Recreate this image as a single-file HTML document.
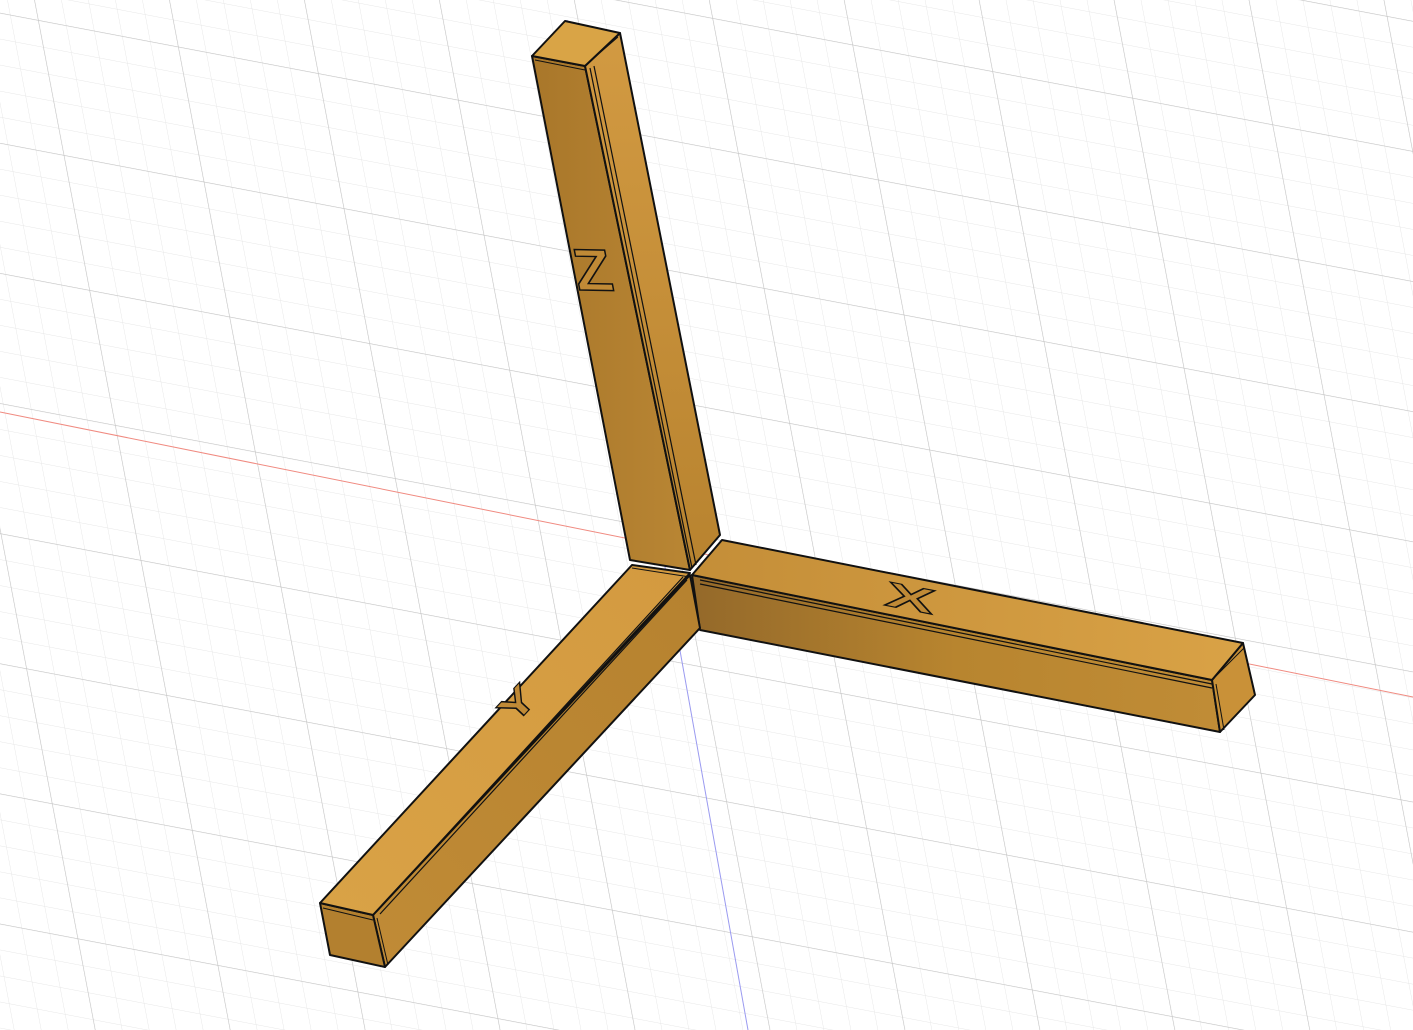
<!DOCTYPE html>
<html><head><meta charset="utf-8"><style>
html,body{margin:0;padding:0;background:#fff;overflow:hidden}
svg{display:block}
</style></head><body>
<svg width="1413" height="1030" viewBox="0 0 1413 1030" xmlns="http://www.w3.org/2000/svg">
<defs>
<pattern id="minor" width="28" height="27" patternUnits="userSpaceOnUse" patternTransform="matrix(1,0.19,0.19,1,38,20)">
<path d="M0 0H28M0 0V27" stroke="#e6e6e6" stroke-width="1" fill="none"/>
</pattern>
<pattern id="major" width="140" height="135" patternUnits="userSpaceOnUse" patternTransform="matrix(1,0.19,0.19,1,38,20)">
<path d="M0 0H140M0 0V135" stroke="#c4c4c4" stroke-width="1.2" fill="none"/>
</pattern>
<linearGradient id="zl" x1="0" y1="0" x2="1" y2="0"><stop offset="0" stop-color="#a9772a"/><stop offset="1" stop-color="#b98634"/></linearGradient>
<linearGradient id="zr" x1="0" y1="0" x2="0" y2="1"><stop offset="0" stop-color="#d29a42"/><stop offset="1" stop-color="#b8832f"/></linearGradient>
<linearGradient id="xf" x1="0" y1="0" x2="1" y2="0"><stop offset="0" stop-color="#94692a"/><stop offset="0.5" stop-color="#b8852f"/><stop offset="1" stop-color="#c08c36"/></linearGradient>
<linearGradient id="xt" x1="0" y1="0" x2="1" y2="0"><stop offset="0" stop-color="#c48e38"/><stop offset="1" stop-color="#d9a246"/></linearGradient>
<linearGradient id="yt" x1="0" y1="1" x2="1" y2="0"><stop offset="0" stop-color="#d9a246"/><stop offset="1" stop-color="#d39a40"/></linearGradient>
<linearGradient id="yr" x1="0" y1="1" x2="1" y2="0"><stop offset="0" stop-color="#c08b36"/><stop offset="1" stop-color="#b6822f"/></linearGradient>
</defs>
<rect width="1413" height="1030" fill="#fff"/>
<rect width="1413" height="1030" fill="url(#minor)"/>
<rect width="1413" height="1030" fill="url(#major)"/>
<line x1="0" y1="412" x2="1413" y2="697" stroke="#f08a80" stroke-width="1"/>
<line x1="567" y1="20" x2="748" y2="1030" stroke="#9a9af0" stroke-width="1"/>
<g stroke="#111" stroke-width="2" stroke-linejoin="round">
<polygon points="532,56 585,66 690,570 630,560" fill="url(#zl)"/>
<polygon points="585,66 620,33 720,535 690,570" fill="url(#zr)"/>
<polygon points="565,21 620,33 585,66 532,56" fill="#d9a446"/>
<line x1="590" y1="68" x2="692" y2="568" stroke-width="1.2"/>
<line x1="594" y1="66" x2="696" y2="565" stroke-width="1.2"/>
<line x1="535" y1="60" x2="585" y2="70" stroke-width="1"/>
<line x1="588" y1="63" x2="618" y2="37" stroke-width="1"/>
<polygon points="692,575 1212,680 1220,732 700,630" fill="url(#xf)"/>
<polygon points="1212,680 1243,643 1255,695 1220,732" fill="#c99138"/>
<polygon points="722,540 1243,643 1212,680 692,575" fill="url(#xt)"/>
<line x1="700" y1="580" x2="1212" y2="684" stroke-width="1.2"/>
<line x1="700" y1="584" x2="1212" y2="688" stroke-width="1.2"/>
<line x1="1216" y1="684" x2="1224" y2="730" stroke-width="1"/>
<line x1="1216" y1="676" x2="1244" y2="648" stroke-width="1"/>
<polygon points="690,575 700,628 385,967 373,915" fill="url(#yr)"/>
<polygon points="320,903 373,915 385,967 330,955" fill="#b3802f"/>
<polygon points="632,565 690,573 373,915 320,903" fill="url(#yt)"/>
<line x1="683" y1="577" x2="376" y2="912" stroke-width="1.2"/>
<line x1="687" y1="580" x2="380" y2="914" stroke-width="1.2"/>
<line x1="377" y1="918" x2="388" y2="965" stroke-width="1"/>
<line x1="323" y1="908" x2="373" y2="920" stroke-width="1"/>
<line x1="632" y1="568" x2="690" y2="577" stroke-width="1"/>
</g>
<g font-family="Liberation Sans, sans-serif" font-weight="bold" fill="#c08a36" stroke="#111" stroke-width="1.5">
<text x="0" y="0" font-size="60" transform="translate(578,290) rotate(-11) skewY(12)">Z</text>
<text x="0" y="0" font-size="46" transform="translate(884,605) rotate(11) scale(1.6,0.75)">X</text>
<text x="0" y="0" font-size="50" transform="translate(514,726) rotate(-47) scale(1.1,0.75)">Y</text>
</g>
</svg>
</body></html>
